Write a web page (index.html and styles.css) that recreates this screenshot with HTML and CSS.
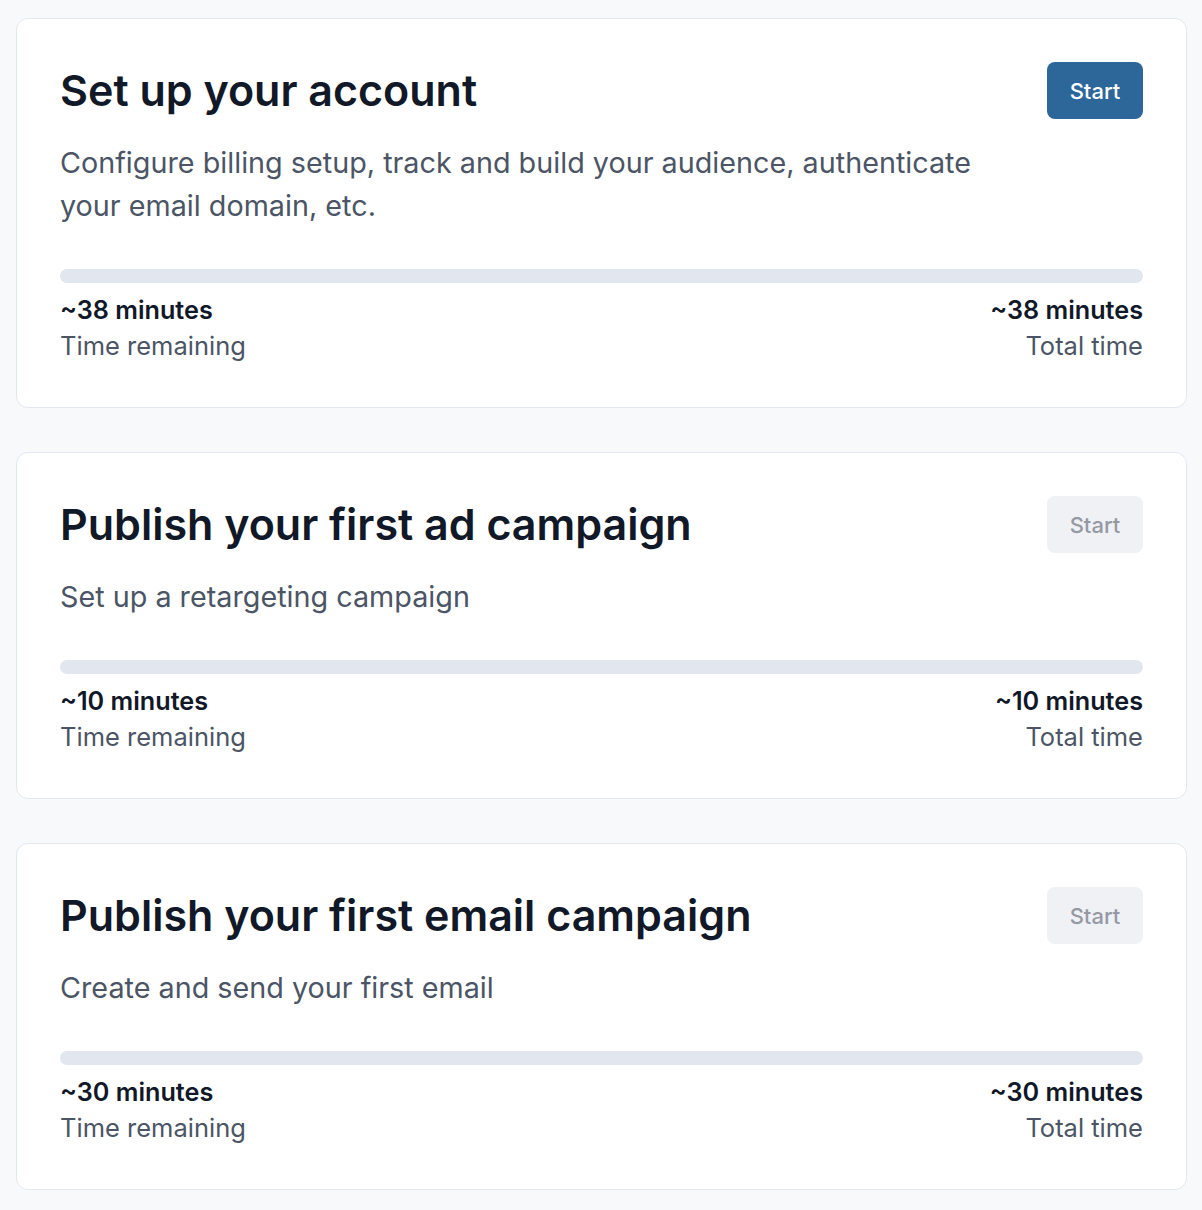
FILE: index.html
```html
<!DOCTYPE html>
<html lang="en">
<head>
<meta charset="utf-8">
<title>Onboarding</title>
<link rel="stylesheet" href="styles.css">
</head>
<body>
<main class="page">
  <section class="card">
    <div class="card-head">
      <h2 class="card-title">Set up your account</h2>
      <button class="btn btn-primary">Start</button>
    </div>
    <p class="card-desc">Configure billing setup, track and build your audience, authenticate your email domain, etc.</p>
    <div class="progress"><div class="progress-fill" style="width:0%"></div></div>
    <div class="stats">
      <div class="stat">
        <div class="stat-value">~38 minutes</div>
        <div class="stat-label">Time remaining</div>
      </div>
      <div class="stat stat-right">
        <div class="stat-value">~38 minutes</div>
        <div class="stat-label">Total time</div>
      </div>
    </div>
  </section>

  <section class="card">
    <div class="card-head">
      <h2 class="card-title">Publish your first ad campaign</h2>
      <button class="btn btn-disabled" disabled>Start</button>
    </div>
    <p class="card-desc">Set up a retargeting campaign</p>
    <div class="progress"><div class="progress-fill" style="width:0%"></div></div>
    <div class="stats">
      <div class="stat">
        <div class="stat-value">~10 minutes</div>
        <div class="stat-label">Time remaining</div>
      </div>
      <div class="stat stat-right">
        <div class="stat-value">~10 minutes</div>
        <div class="stat-label">Total time</div>
      </div>
    </div>
  </section>

  <section class="card">
    <div class="card-head">
      <h2 class="card-title">Publish your first email campaign</h2>
      <button class="btn btn-disabled" disabled>Start</button>
    </div>
    <p class="card-desc">Create and send your first email</p>
    <div class="progress"><div class="progress-fill" style="width:0%"></div></div>
    <div class="stats">
      <div class="stat">
        <div class="stat-value">~30 minutes</div>
        <div class="stat-label">Time remaining</div>
      </div>
      <div class="stat stat-right">
        <div class="stat-value">~30 minutes</div>
        <div class="stat-label">Total time</div>
      </div>
    </div>
  </section>
</main>
</body>
</html>
```

FILE: styles.css
```css
* { box-sizing: border-box; }

html, body {
  margin: 0;
  padding: 0;
  background: #f8f9fb;
  font-family: Inter, "Noto Sans", "Liberation Sans", sans-serif;
  color: #111827;
}

.page {
  display: flex;
  flex-direction: column;
  gap: 44px;
  padding: 18px 15px 20px 16px;
}

.card {
  background: #ffffff;
  border: 1px solid #e3e7ee;
  border-radius: 12px;
  padding: 43px 43px 43px 43px;
}

.card-head {
  display: flex;
  align-items: center;
  justify-content: space-between;
  gap: 24px;
}

.card-title {
  margin: 0;
  font-size: 43px;
  font-weight: 600;
  line-height: 1.2;
  color: #111827;
}

.btn {
  width: 96px;
  height: 57px;
  border: none;
  border-radius: 8px;
  font-family: inherit;
  font-size: 22px;
  font-weight: 500;
  flex-shrink: 0;
}

.btn-primary {
  background: #2d6699;
  color: #ffffff;
}

.btn-disabled {
  background: #f0f1f5;
  color: #9499a3;
}

.card-desc {
  margin: 22px 0 0;
  max-width: 960px;
  font-size: 28.75px;
  line-height: 43px;
  color: #4b5565;
}

.progress {
  margin-top: 42px;
  height: 14px;
  border-radius: 999px;
  background: #e2e6ee;
  overflow: hidden;
}

.progress-fill {
  height: 100%;
  background: #2d6699;
}

.stats {
  display: flex;
  justify-content: space-between;
  margin-top: 9px;
}

.stat-right { text-align: right; }

.stat-value {
  font-size: 25.2px;
  font-weight: 600;
  line-height: 36px;
  color: #111827;
}

.stat-label {
  font-size: 25.5px;
  line-height: 36px;
  color: #4b5565;
}
```
